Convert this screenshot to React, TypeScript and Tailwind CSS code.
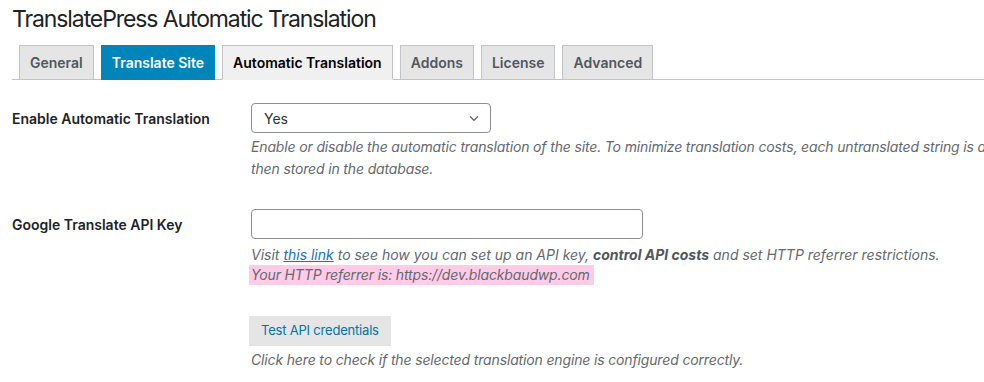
import React from "react";

const font = { fontFamily: 'Inter, "Noto Sans", sans-serif' };

function Tab({ label, kind }: { label: string; kind: "normal" | "blue" | "active" }) {
  const cls =
    kind === "blue"
      ? "bg-[#0085ba] border-[#0085ba] text-white"
      : kind === "active"
      ? "bg-[#f0f0f1] border-[#c3c4c7] border-b-[#f0f0f1] text-black"
      : "bg-[#e5e5e5] border-[#c3c4c7] text-[#50575e]";
  return (
    <div
      className={`ml-[7px] -mb-px h-[35px] border px-[10px] flex items-center text-[14px] font-semibold leading-[24px] ${cls}`}
    >
      {label}
    </div>
  );
}

export default function App() {
  return (
    <div className="w-[984px] h-[382px] overflow-hidden bg-white text-[#1d2327]" style={font}>
      <div className="pl-[12px]">
        <h1 className="pt-[5px] text-[23px] leading-[29px] font-normal tracking-[-1.1px] text-[#1d2327]">
          TranslatePress Automatic Translation
        </h1>
        <div className="mt-[11px] flex border-b border-[#c3c4c7]">
          <Tab label="General" kind="normal" />
          <Tab label="Translate Site" kind="blue" />
          <Tab label="Automatic Translation" kind="active" />
          <Tab label="Addons" kind="normal" />
          <Tab label="License" kind="normal" />
          <Tab label="Advanced" kind="normal" />
        </div>

        {/* Row 1 */}
        <div className="mt-[23px] flex">
          <div className="w-[239px] h-[30px] flex items-center text-[14px] font-semibold">
            Enable Automatic Translation
          </div>
          <div className="flex-1 min-w-0">
            <div className="w-[240px] h-[30px] border border-[#8c8f94] rounded-[4px] flex items-center justify-between pl-[12px] pr-[8px] text-[14px] text-[#2c3338]">
              <span>Yes</span>
              <svg width="16" height="16" viewBox="0 0 20 20" className="text-[#50575e]">
                <path d="M5 8l5 5 5-5" fill="none" stroke="currentColor" strokeWidth="1.6" />
              </svg>
            </div>
            <div className="mt-[3px] text-[14px] leading-[22px] italic tracking-[-0.15px] text-[#646970] whitespace-nowrap">
              <div>
                Enable or disable the automatic translation of the site. To minimize translation costs, each untranslated string is automatically translated only once,
              </div>
              <div>then stored in the database.</div>
            </div>
          </div>
        </div>

        {/* Row 2 */}
        <div className="mt-[29px] flex">
          <div className="w-[239px] h-[30px] flex items-center text-[14px] font-semibold">
            Google Translate API Key
          </div>
          <div className="flex-1 min-w-0">
            <div className="w-[392px] h-[30px] border border-[#8c8f94] rounded-[4px] bg-white" />
            <div className="mt-[6px] text-[14px] leading-[20px] italic text-[#646970] whitespace-nowrap">
              <div>
                Visit{" "}
                <a className="text-[#2271b1] underline" href="#">
                  this link
                </a>{" "}
                to see how you can set up an API key, <strong className="font-bold text-[#50575e]">control API costs</strong> and set HTTP referrer restrictions.
              </div>
              <div>
                <span className="inline-block bg-[#ffcbe7] -ml-[2px] pl-[2px] pr-[4px] tracking-[-0.15px]">
                  Your HTTP referrer is: https://dev.blackbaudwp.com
                </span>
              </div>
            </div>
            <div className="mt-[31px] -ml-[2px] inline-flex h-[30px] items-center bg-[#e5e5e5] px-[12px] text-[13px] tracking-[-0.2px] text-[#0073aa]">
              Test API credentials
            </div>
            <div className="mt-[3px] text-[14px] leading-[22px] italic tracking-[-0.15px] text-[#646970] whitespace-nowrap">
              Click here to check if the selected translation engine is configured correctly.
            </div>
          </div>
        </div>
      </div>
    </div>
  );
}
